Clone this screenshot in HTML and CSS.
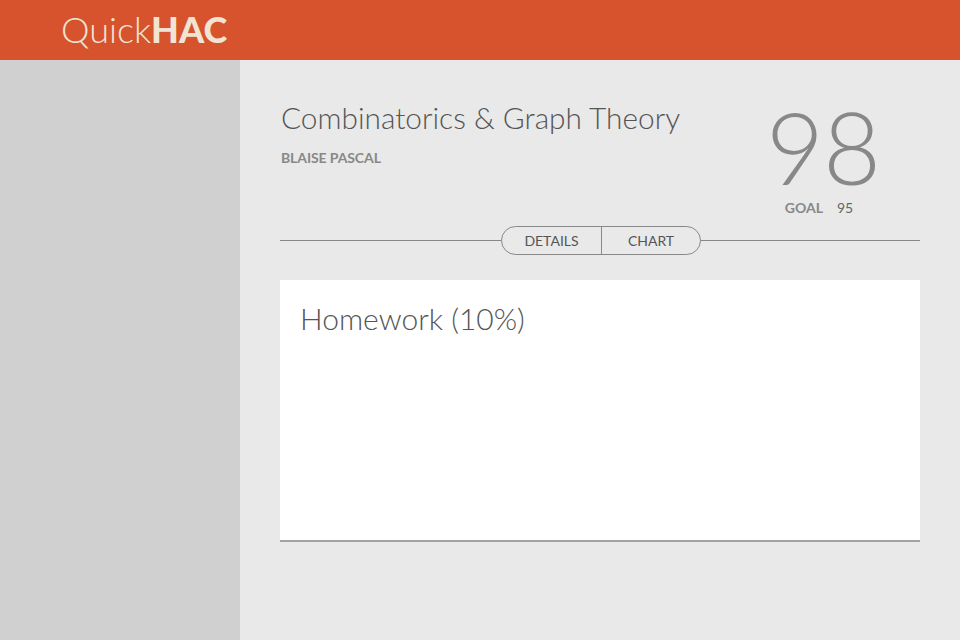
FILE: index.html
```html
<!DOCTYPE html>
<html>
<head>
<meta charset="utf-8">
<link rel="stylesheet" href="styles.css">
</head>
<body>
<header class="topbar">
  <div class="logo"><span class="logo-light">Quick</span><span class="logo-bold">HAC</span></div>
</header>
<div class="layout">
  <aside class="sidebar"></aside>
  <main class="main">
    <section class="course">
      <div class="course-info">
        <h1 class="course-title">Combinatorics &amp; Graph Theory</h1>
        <div class="teacher">BLAISE PASCAL</div>
      </div>
      <div class="grade">
        <div class="grade-value">98</div>
        <div class="goal"><span class="goal-label">GOAL</span><span class="goal-value">95</span></div>
      </div>
    </section>
    <div class="tabs-row">
      <div class="tabs">
        <div class="tab">DETAILS</div>
        <div class="tab">CHART</div>
      </div>
    </div>
    <section class="card">
      <h2 class="card-title">Homework (10%)</h2>
    </section>
  </main>
</div>
</body>
</html>
```
FILE: styles.css
```css
* { box-sizing: border-box; }
html, body { margin: 0; padding: 0; height: 100%; }
body {
  font-family: Lato, "Open Sans", sans-serif;
  background: #e9e9e9;
  color: #555;
  display: flex;
  flex-direction: column;
}
.topbar {
  height: 60px;
  background: #d6532e;
  display: flex;
  align-items: center;
  padding-left: 61px;
  flex: none;
}
.logo {
  font-size: 36px;
  color: #f1e4d4;
  line-height: 1;
  margin-top: -3px;
}
.logo-light { font-weight: 300; }
.logo-bold { font-weight: 900; }
.layout {
  flex: 1;
  display: flex;
}
.sidebar {
  width: 240px;
  background: #d0d0d0;
  flex: none;
}
.main {
  flex: 1;
  padding: 40px 40px 0 40px;
}
.course {
  display: flex;
  justify-content: space-between;
  align-items: flex-start;
  height: 120px;
}
.course-title {
  margin: 0;
  font-size: 29.8px;
  font-weight: 300;
  color: #555;
  line-height: 36px;
  padding-left: 1px;
}
.teacher {
  margin-top: 14px;
  font-size: 14px;
  line-height: 16px;
  font-weight: 700;
  color: #888;
  letter-spacing: -0.1px;
  padding-left: 1px;
}
.grade {
  display: flex;
  flex-direction: column;
  align-items: center;
  width: 150px;
  margin-right: 22px;
}
.grade-value {
  font-size: 100px;
  font-weight: 300;
  color: #888;
  line-height: 100px;
  letter-spacing: -1px;
  margin-top: -4px;
}
.goal {
  margin-top: 4px;
  display: flex;
  gap: 14px;
  align-items: baseline;
  margin-left: -8px;
  line-height: 16px;
}
.goal-label {
  font-size: 14px;
  font-weight: 700;
  color: #888;
}
.goal-value {
  font-size: 14px;
  color: #666;
}
.tabs-row {
  display: flex;
  justify-content: center;
  align-items: center;
  height: 40px;
  position: relative;
}
.tabs-row::before {
  content: "";
  position: absolute;
  left: 0; right: 0;
  top: 20px;
  height: 1px;
  background: #888;
}
.tabs {
  position: relative;
  display: flex;
  border: 1px solid #888;
  border-radius: 15px;
  background: #e9e9e9;
  height: 29px;
  margin-left: 2px;
}
.tab {
  width: 99px;
  display: flex;
  align-items: center;
  justify-content: center;
  font-size: 14px;
  color: #555;
}
.tab + .tab { border-left: 1px solid #888; }
.card {
  margin-top: 20px;
  background: #fff;
  height: 262px;
  border-bottom: 2px solid #a3a3a3;
  padding: 20px 20px;
}
.card-title {
  margin: 0;
  font-size: 30px;
  font-weight: 300;
  color: #555;
  line-height: 36px;
}
```
